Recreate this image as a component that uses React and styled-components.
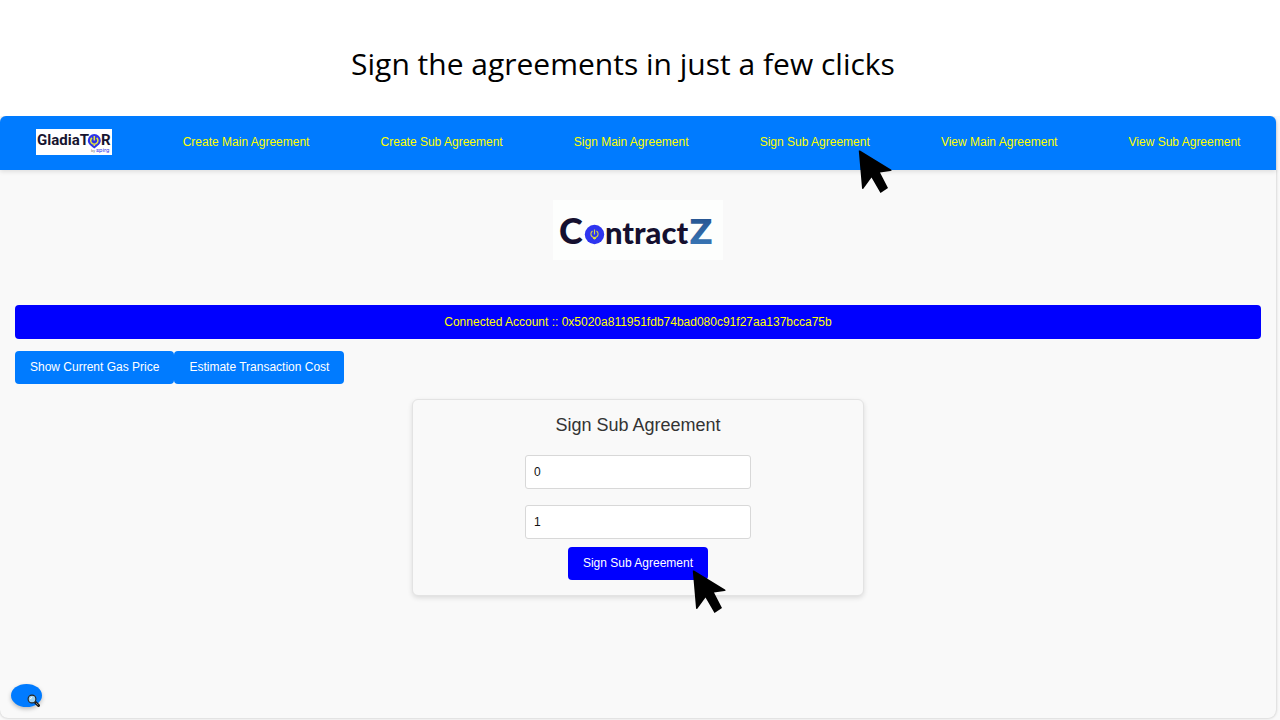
import React, { useState } from "react";
import styled, { createGlobalStyle } from "styled-components";

const GlobalStyle = createGlobalStyle`
  *, *::before, *::after { box-sizing: border-box; }
  html, body, #root { height: 100%; }
  body {
    margin: 0;
    background: #fff;
    font-family: "Liberation Sans", Arial, sans-serif;
    font-size: 12px;
    line-height: 16px;
    color: #333;
  }
`;

const Slide = styled.div`
  display: flex;
  flex-direction: column;
  min-height: 100%;
`;

const Headline = styled.h1`
  margin: 0;
  padding: 44px 34px 32px 0;
  font: 400 30px/40px "Open Sans", "Noto Sans", sans-serif;
  text-align: center;
  color: #000;
`;

const Stage = styled.div`
  flex: 1;
  display: flex;
  padding: 0 4px 2px 0;
  background: #f9f9f9;
  overflow: hidden;
`;

const Panel = styled.div`
  flex: 1;
  display: flex;
  flex-direction: column;
  border-radius: 8px;
  background: #f9f9f9;
  box-shadow: 0 0 3px rgba(0, 0, 0, 0.25);
`;

const Nav = styled.nav`
  display: flex;
  align-items: center;
  justify-content: space-around;
  height: 54px;
  padding-bottom: 2px;
  border-radius: 6px 6px 0 0;
  background: #007bff;
  box-shadow: 0 2px 4px rgba(0, 0, 0, 0.1);
`;

const BrandLogo = styled.svg`
  display: block;
  width: 76px;
  height: 26px;
`;

const NavItem = styled.span`
  position: relative;
`;

const NavLink = styled.a`
  color: #ff0;
  text-decoration: none;
`;

const Content = styled.main`
  flex: 1;
  display: flex;
  flex-direction: column;
  padding: 30px 15px 11px;
`;

const ProductLogo = styled.svg`
  display: block;
  align-self: center;
  width: 170px;
  height: 60px;
`;

const AccountBar = styled.div`
  margin-top: 45px;
  padding: 9px 15px;
  border-radius: 4px;
  background: #00f;
  color: #ff0;
  text-align: center;
`;

const Actions = styled.div`
  display: flex;
  margin-top: 12px;
`;

const Button = styled.button`
  padding: 8px 15px;
  border: 0;
  border-radius: 4px;
  background: ${(p) => (p.$strong ? "#00f" : "#007bff")};
  color: #fff;
  font: inherit;
  line-height: 17px;
  cursor: pointer;
`;

const Card = styled.form`
  display: flex;
  flex-direction: column;
  align-items: center;
  align-self: center;
  width: 100%;
  max-width: 452px;
  margin-top: 15px;
  padding: 13px 15px 15px;
  border: 1px solid #e3e3e3;
  border-radius: 6px;
  background: #f9f9f9;
  box-shadow: 0 2px 5px rgba(0, 0, 0, 0.12);
`;

const CardTitle = styled.h2`
  margin: 0 0 18px;
  font-size: 18px;
  font-weight: 400;
  line-height: 24px;
  color: #333;
`;

const Field = styled.input`
  width: 100%;
  max-width: 226px;
  height: 34px;
  margin-bottom: ${(p) => (p.$last ? "8px" : "16px")};
  padding: 0 8px;
  border: 1px solid #d8d8d8;
  border-radius: 3px;
  background: #fff;
  color: #111;
  font: inherit;
`;

const SubmitRow = styled.div`
  position: relative;
`;

const Pointer = styled.svg`
  position: absolute;
  z-index: 1;
  top: ${(p) => p.$top};
  right: ${(p) => p.$right};
  width: 34px;
  height: 44px;
  pointer-events: none;
`;

const SearchButton = styled.button`
  display: flex;
  align-items: flex-end;
  justify-content: flex-end;
  width: 31px;
  height: 23px;
  margin: auto 0 0 -4px;
  padding: 0 2px 0 0;
  border: 0;
  border-radius: 50%;
  background: #007bff;
  box-shadow: 0 2px 4px rgba(0, 0, 0, 0.25);
  cursor: pointer;
`;

const SearchIcon = styled.svg`
  display: block;
  flex: none;
  width: 13px;
  height: 13px;
`;

function Cursor({ top, right }) {
  return (
    <Pointer $top={top} $right={right} viewBox="0 0 34 44" aria-hidden="true">
      <path
        d="M.8 1Q.5 0 2 .6L33 19.500Q34.500 20.700 32.500 21L22 22.500 30 38 22.500 43 13.500 27.500 5.500 38.500Q4.200 39.800 4 38Z"
        fill="#000"
      />
    </Pointer>
  );
}

function GladiatorLogo() {
  return (
    <BrandLogo viewBox="0 0 76 26" role="img" aria-label="GladiaTOR by spirg">
      <rect width="76" height="26" fill="#fff" />
      <g fontFamily="Roboto, sans-serif" fontWeight="700" fontSize="15" fill="#17152f">
        <text x="1" y="16">GladiaT</text>
        <text x="65" y="16">R</text>
      </g>
      <path d="M51.800 11.500a6.500 6.500 0 0 1 13 0C64.800 15 62 16.500 58.300 19.500 54.600 16.500 51.800 15 51.800 11.500Z" fill="#3136ea" />
      <path d="M56 8.800a3.600 3.600 0 1 0 4.600 0M58.300 7v4.500M58.300 15v2" fill="none" stroke="#e6e83a" strokeWidth="1.500" />
      <text x="55" y="23" fontFamily="Roboto, sans-serif" fontSize="4" fill="#777">by</text>
      <text x="60" y="23" fontFamily="Roboto, sans-serif" fontSize="6" fill="#3136ea">spirg</text>
    </BrandLogo>
  );
}

function ContractzLogo() {
  return (
    <ProductLogo viewBox="0 0 170 60" role="img" aria-label="ContractZ">
      <defs>
        <linearGradient id="zFill" x1="0" y1="0" x2="0" y2="1">
          <stop offset="0" stopColor="#24508c" />
          <stop offset="1" stopColor="#3c7dbd" />
        </linearGradient>
      </defs>
      <rect width="170" height="60" fill="#fdfefd" />
      <g fontFamily="Lato, sans-serif" fontWeight="900" fill="#15102f">
        <text x="6" y="44" fontSize="36">C</text>
        <text x="52" y="44" fontSize="31">ntract</text>
      </g>
      <text x="136" y="44" fontFamily="DejaVu Sans, sans-serif" fontWeight="700" fontSize="33" fill="url(#zFill)">Z</text>
      <circle cx="41.500" cy="34.500" r="9.700" fill="#2e35f0" />
      <path d="M39.500 31a3.600 3.600 0 1 0 4 0M41.500 29.500v5M40 38.500h3M41.500 38v1.500" fill="none" stroke="#d9dc3c" strokeWidth="1.100" />
    </ProductLogo>
  );
}

const links = [
  "Create Main Agreement",
  "Create Sub Agreement",
  "Sign Main Agreement",
  "Sign Sub Agreement",
  "View Main Agreement",
  "View Sub Agreement",
];

export default function App() {
  const [mainId, setMainId] = useState("0");
  const [subId, setSubId] = useState("1");

  return (
    <>
      <GlobalStyle />
      <Slide>
        <Headline>Sign the agreements in just a few clicks</Headline>
        <Stage>
          <Panel>
            <Nav>
              <GladiatorLogo />
              {links.map((label) => (
                <NavItem key={label}>
                  <NavLink href="#">{label}</NavLink>
                  {label === "Sign Sub Agreement" && <Cursor top="16px" right="-22px" />}
                </NavItem>
              ))}
            </Nav>
            <Content>
              <ContractzLogo />
              <AccountBar>Connected Account :: 0x5020a811951fdb74bad080c91f27aa137bcca75b</AccountBar>
              <Actions>
                <Button type="button">Show Current Gas Price</Button>
                <Button type="button">Estimate Transaction Cost</Button>
              </Actions>
              <Card onSubmit={(e) => e.preventDefault()}>
                <CardTitle>Sign Sub Agreement</CardTitle>
                <Field
                  aria-label="Main agreement ID"
                  value={mainId}
                  onChange={(e) => setMainId(e.target.value)}
                />
                <Field
                  $last
                  aria-label="Sub agreement ID"
                  value={subId}
                  onChange={(e) => setSubId(e.target.value)}
                />
                <SubmitRow>
                  <Button $strong type="submit">Sign Sub Agreement</Button>
                  <Cursor top="23px" right="-18px" />
                </SubmitRow>
              </Card>
              <SearchButton type="button" aria-label="Search">
                <SearchIcon viewBox="0 0 13 13" aria-hidden="true">
                  <path d="m7.500 7.500 4 4" stroke="#1c1c1c" strokeWidth="3" strokeLinecap="round" />
                  <path d="m9 9 2.200 2.200" stroke="#777" strokeWidth="1" />
                  <circle cx="5" cy="5" r="3.900" fill="#9fd3f2" stroke="#222" strokeWidth="1.100" />
                  <path d="M3.500 5a1.500 1.500 0 0 1 1.500-1.500" fill="none" stroke="#fff" strokeWidth="1" />
                </SearchIcon>
              </SearchButton>
            </Content>
          </Panel>
        </Stage>
      </Slide>
    </>
  );
}
